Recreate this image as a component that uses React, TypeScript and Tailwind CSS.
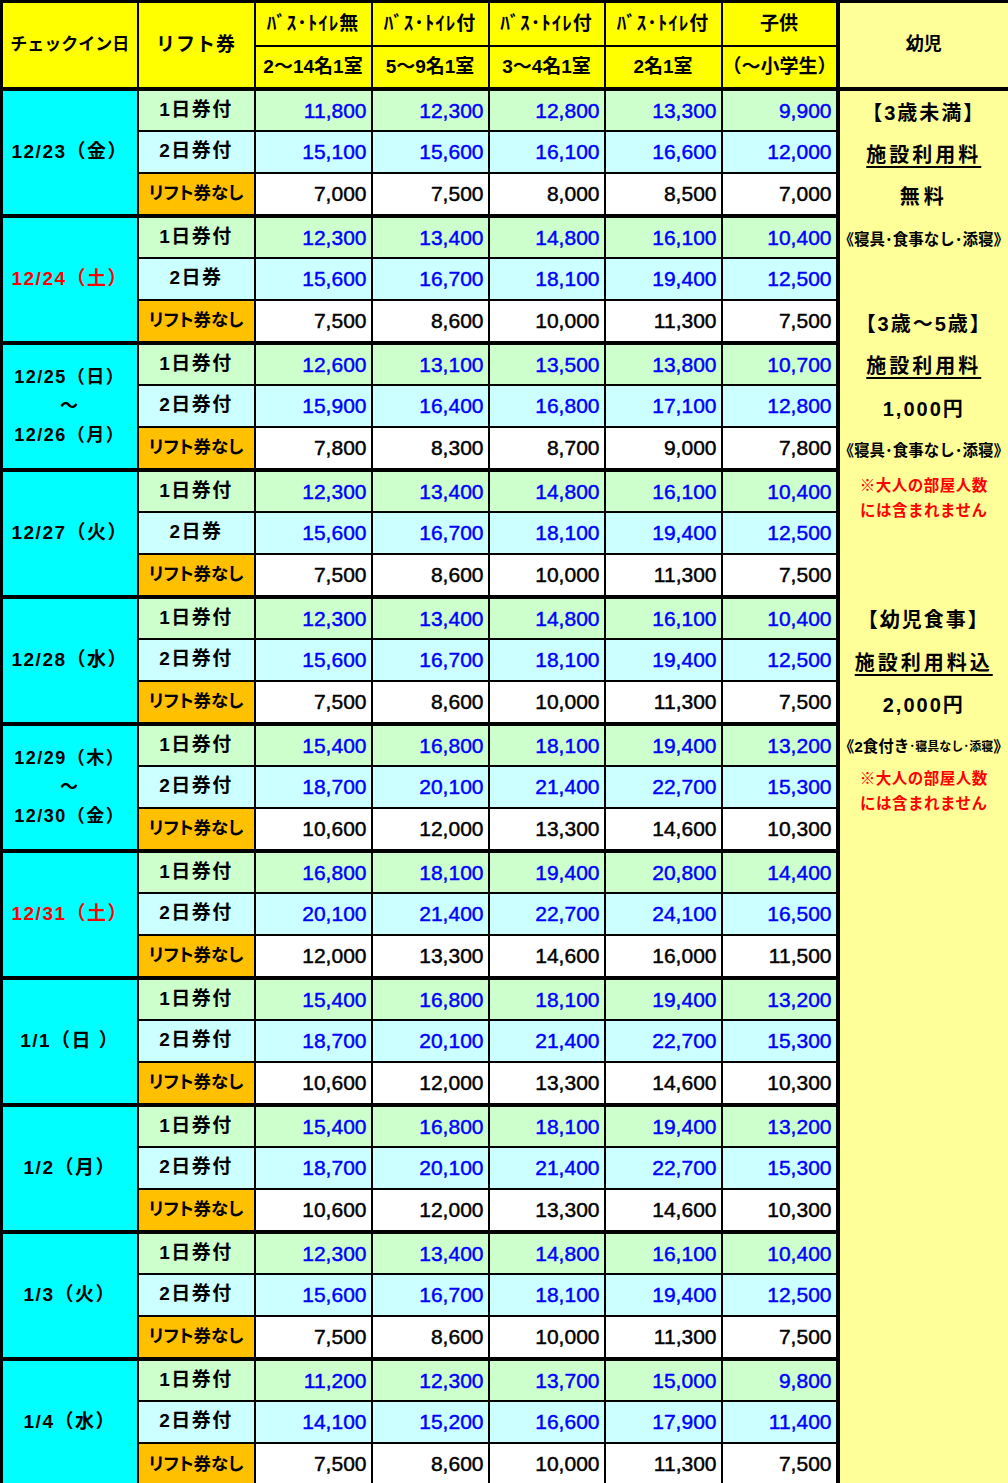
import React from "react";

type Group = {
  date: string[];
  red?: boolean;
  second: string;
  rows: number[][];
};

const A = [
  [12300, 13400, 14800, 16100, 10400],
  [15600, 16700, 18100, 19400, 12500],
  [7500, 8600, 10000, 11300, 7500],
];
const B = [
  [15400, 16800, 18100, 19400, 13200],
  [18700, 20100, 21400, 22700, 15300],
  [10600, 12000, 13300, 14600, 10300],
];

const groups: Group[] = [
  {
    date: ["12/23（金）"],
    second: "2日券付",
    rows: [
      [11800, 12300, 12800, 13300, 9900],
      [15100, 15600, 16100, 16600, 12000],
      [7000, 7500, 8000, 8500, 7000],
    ],
  },
  { date: ["12/24（土）"], red: true, second: "2日券", rows: A },
  {
    date: ["12/25（日）", "～", "12/26（月）"],
    second: "2日券付",
    rows: [
      [12600, 13100, 13500, 13800, 10700],
      [15900, 16400, 16800, 17100, 12800],
      [7800, 8300, 8700, 9000, 7800],
    ],
  },
  { date: ["12/27（火）"], second: "2日券", rows: A },
  { date: ["12/28（水）"], second: "2日券付", rows: A },
  { date: ["12/29（木）", "～", "12/30（金）"], second: "2日券付", rows: B },
  {
    date: ["12/31（土）"],
    red: true,
    second: "2日券付",
    rows: [
      [16800, 18100, 19400, 20800, 14400],
      [20100, 21400, 22700, 24100, 16500],
      [12000, 13300, 14600, 16000, 11500],
    ],
  },
  { date: ["1/1（日 ）"], second: "2日券付", rows: B },
  { date: ["1/2（月）"], second: "2日券付", rows: B },
  { date: ["1/3（火）"], second: "2日券付", rows: A },
  {
    date: ["1/4（水）"],
    second: "2日券付",
    rows: [
      [11200, 12300, 13700, 15000, 9800],
      [14100, 15200, 16600, 17900, 11400],
      [7500, 8600, 10000, 11300, 7500],
    ],
  },
];

const fmt = (n: number) => n.toLocaleString("en-US");

const rowBg = ["bg-[#ccffcc]", "bg-[#ccffff]", "bg-white"];
const labelBg = ["bg-[#ccffcc]", "bg-[#ccffff]", "bg-[#ffc000]"];

function Line({
  children,
  className = "",
}: {
  children?: React.ReactNode;
  className?: string;
}) {
  return (
    <div className={`flex h-[42.3px] items-center justify-center ${className}`}>
      {children}
    </div>
  );
}

function InfantColumn() {
  const big = "text-[20px] font-bold";
  const small = "text-[15.5px] font-bold whitespace-nowrap";
  const red = "text-[15.5px] font-bold text-[#ff0000] leading-[25px] tracking-[0.5px]";
  return (
    <div className="flex flex-col pt-[1px]">
      <Line className={`${big} tracking-[2px]`}>【3歳未満】</Line>
      <Line className={`${big} tracking-[3px]`}>
        <span className="underline underline-offset-[4px]">施設利用料</span>
      </Line>
      <Line className={`${big} tracking-[4px]`}>無料</Line>
      <Line className={small}>《寝具･食事なし･添寝》</Line>
      <Line />
      <Line className={`${big} tracking-[2px]`}>【3歳～5歳】</Line>
      <Line className={`${big} tracking-[3px]`}>
        <span className="underline underline-offset-[4px]">施設利用料</span>
      </Line>
      <Line className={`${big} tracking-[2px]`}>1,000円</Line>
      <Line className={small}>《寝具･食事なし･添寝》</Line>
      <Line className={`${red} flex-col pt-[10px]`}>
        <span>※大人の部屋人数</span>
        <span>には含まれません</span>
      </Line>
      <Line />
      <Line />
      <Line className={`${big} tracking-[2px]`}>【幼児食事】</Line>
      <Line className={`${big} tracking-[3px]`}>
        <span className="underline underline-offset-[4px]">施設利用料込</span>
      </Line>
      <Line className={`${big} tracking-[2px]`}>2,000円</Line>
      <Line className="whitespace-nowrap font-bold">
        <span className="text-[15.5px]">《2食付き</span>
        <span className="text-[12px]">･寝具なし･添寝</span>
        <span className="text-[15.5px]">》</span>
      </Line>
      <Line className={`${red} flex-col pt-[4px]`}>
        <span>※大人の部屋人数</span>
        <span>には含まれません</span>
      </Line>
    </div>
  );
}

export default function App() {
  const hdr =
    "bg-[#ffff00] border-2 border-black text-center font-bold leading-none whitespace-nowrap";
  return (
    <div className="w-[1008px] bg-white font-['Liberation_Sans','Noto_Sans_CJK_JP',sans-serif] text-black">
      <table className="w-[1008px] table-fixed border-collapse border-[3px] border-black">
        <colgroup>
          <col className="w-[136px]" />
          <col className="w-[117px]" />
          <col className="w-[117px]" />
          <col className="w-[117px]" />
          <col className="w-[116px]" />
          <col className="w-[117px]" />
          <col className="w-[116px]" />
          <col className="w-[172px]" />
        </colgroup>
        <thead>
          <tr className="h-[44px]">
            <th rowSpan={2} className={`${hdr} border-b-4 px-0 text-[17px]`}>
              チェックイン日
            </th>
            <th rowSpan={2} className={`${hdr} border-b-4 text-[19px] tracking-[1px]`}>
              リフト券
            </th>
            <th className={`${hdr} text-[19px] tracking-[1px]`}>ﾊﾞｽ･ﾄｲﾚ無</th>
            <th className={`${hdr} text-[19px] tracking-[1px]`}>ﾊﾞｽ･ﾄｲﾚ付</th>
            <th className={`${hdr} text-[19px] tracking-[1px]`}>ﾊﾞｽ･ﾄｲﾚ付</th>
            <th className={`${hdr} text-[19px] tracking-[1px]`}>ﾊﾞｽ･ﾄｲﾚ付</th>
            <th className={`${hdr} text-[19px]`}>子供</th>
            <th
              rowSpan={2}
              className="border-[3px] border-l-4 border-b-4 border-black bg-[#ffff99] text-center text-[18px] font-bold"
            >
              幼児
            </th>
          </tr>
          <tr className="h-[43px]">
            <th className={`${hdr} border-b-4 text-[19px]`}>2～14名1室</th>
            <th className={`${hdr} border-b-4 text-[19px]`}>5～9名1室</th>
            <th className={`${hdr} border-b-4 text-[19px]`}>3～4名1室</th>
            <th className={`${hdr} border-b-4 text-[19px]`}>2名1室</th>
            <th className={`${hdr} border-b-4 text-[19px]`}>（～小学生）</th>
          </tr>
        </thead>
        <tbody>
          {groups.map((g, gi) =>
            g.rows.map((r, ri) => (
              <tr key={`${gi}-${ri}`} className={ri === 2 ? "h-[43px]" : "h-[42px]"}>
                {ri === 0 && (
                  <td
                    rowSpan={3}
                    className={`border-2 border-black bg-[#00ffff] text-center font-bold tracking-[1.5px] ${
                      gi > 0 ? "border-t-4" : ""
                    } ${g.red ? "text-[#ff0000]" : "text-black"}`}
                  >
                    {g.date.length === 1 ? (
                      <span className="text-[19px]">{g.date[0]}</span>
                    ) : (
                      <div className="flex flex-col items-center text-[18px] leading-[29px]">
                        {g.date.map((d, i) => (
                          <span key={i}>{d}</span>
                        ))}
                      </div>
                    )}
                  </td>
                )}
                <td
                  className={`border-2 border-black ${labelBg[ri]} whitespace-nowrap text-center font-bold ${
                    ri === 2
                      ? "text-[17.5px] [font-feature-settings:'palt']"
                      : "text-[19px] tracking-[1.5px]"
                  } ${ri === 0 && gi > 0 ? "border-t-4" : ""}`}
                >
                  {ri === 0 ? "1日券付" : ri === 1 ? g.second : "リフト券なし"}
                </td>
                {r.map((v, vi) => (
                  <td
                    key={vi}
                    className={`border-2 border-black ${rowBg[ri]} pr-[4px] text-right text-[21px] font-normal leading-none [-webkit-text-stroke:0.45px] ${
                      ri === 2 ? "text-black" : "text-[#0000ff]"
                    } ${ri === 0 && gi > 0 ? "border-t-4" : ""}`}
                  >
                    {fmt(v)}
                  </td>
                ))}
                {gi === 0 && ri === 0 && (
                  <td
                    rowSpan={33}
                    className="border-[3px] border-l-4 border-black bg-[#ffff99] p-0 align-top text-black"
                  >
                    <InfantColumn />
                  </td>
                )}
              </tr>
            ))
          )}
        </tbody>
      </table>
    </div>
  );
}
